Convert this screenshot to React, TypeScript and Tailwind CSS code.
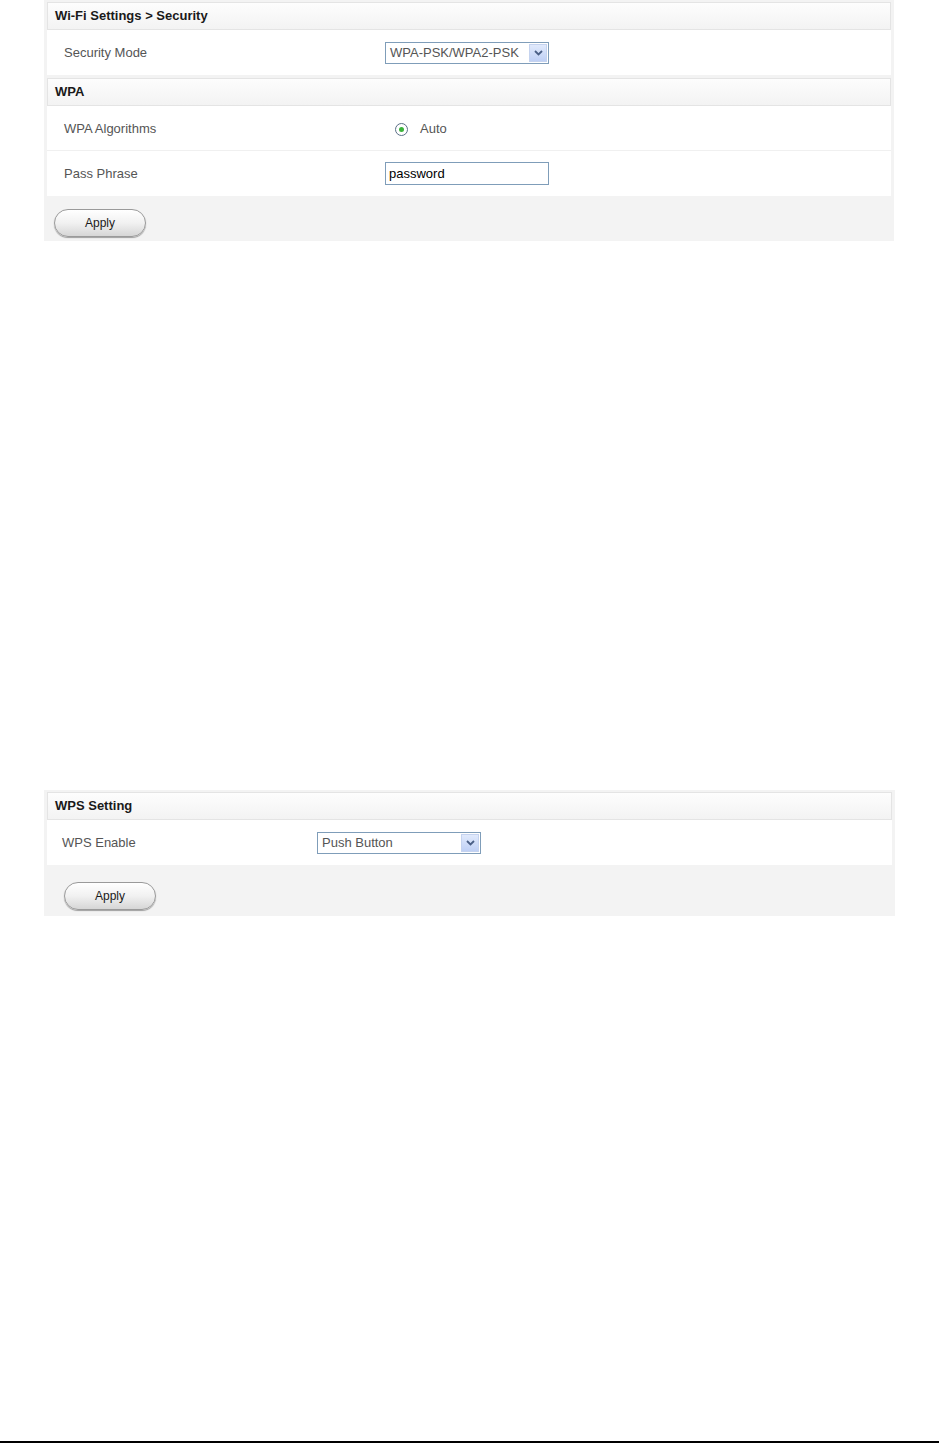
import React from "react";

const font = { fontFamily: '"Liberation Sans", Arial, sans-serif' };

const SectionHeader = ({ title }: { title: string }) => (
  <div className="mx-[3px] h-[28px] border border-[#e4e4e4] bg-gradient-to-b from-[#fdfdfd] to-[#f3f3f3] px-[7px] flex items-center text-[13px] font-bold text-[#1a1a1a]">
    {title}
  </div>
);

const Row = ({
  label,
  labelPad,
  valueLeft,
  children,
  divider,
}: {
  label: string;
  labelPad: string;
  valueLeft: string;
  children: React.ReactNode;
  divider?: boolean;
}) => (
  <div
    className={`mx-[3px] h-[45px] bg-white flex items-center ${divider ? "border-b border-[#f0f0f0] pt-[2px]" : ""}`}
  >
    <div className={`${labelPad} ${valueLeft} text-[13px] text-[#555]`}>{label}</div>
    <div className="flex items-center">{children}</div>
  </div>
);

const Arrow = () => (
  <div className="w-[18px] h-[18px] mr-[1px] bg-gradient-to-b from-[#e1eafc] to-[#bfd0f5] border border-[#c5d3ef] flex items-center justify-center">
    <svg width="9" height="6" viewBox="0 0 9 6">
      <path d="M1 1 L4.5 4.5 L8 1" fill="none" stroke="#4a5f86" strokeWidth="1.8" />
    </svg>
  </div>
);

const Select = ({ value }: { value: string }) => (
  <div className="w-[164px] h-[22px] border border-[#7f9db9] bg-white flex items-center justify-between">
    <span className="pl-[4px] text-[13px] text-[#555]">{value}</span>
    <Arrow />
  </div>
);

const ApplyButton = () => (
  <button
    type="button"
    className="w-[92px] h-[28px] rounded-full border border-[#9a9a9a] bg-gradient-to-b from-[#ffffff] via-[#f1f1f1] to-[#d6d6d6] shadow-[0_1px_1px_rgba(0,0,0,0.35)] text-[12px] text-[#1a1a1a]"
  >
    Apply
  </button>
);

export default function App() {
  return (
    <div className="w-[939px] h-[1443px] bg-white flex flex-col" style={font}>
      <div className="ml-[44px] w-[850px] bg-[#f3f3f3] pt-[2px]">
        <SectionHeader title="Wi-Fi Settings > Security" />
        <Row label="Security Mode" labelPad="pl-[17px]" valueLeft="w-[338px]">
          <Select value="WPA-PSK/WPA2-PSK" />
        </Row>
        <div className="h-[3px]" />
        <SectionHeader title="WPA" />
        <Row label="WPA Algorithms" labelPad="pl-[17px]" valueLeft="w-[348px]" divider>
          <span className="w-[13px] h-[13px] rounded-full border border-[#5a6f86] bg-white flex items-center justify-center">
            <span className="w-[5px] h-[5px] rounded-full bg-[#3bb33b]" />
          </span>
          <span className="ml-[12px] text-[13px] text-[#555]">Auto</span>
        </Row>
        <Row label="Pass Phrase" labelPad="pl-[17px]" valueLeft="w-[338px]">
          <div className="w-[164px] h-[23px] border border-[#7f9db9] bg-white flex items-center pl-[3px] text-[13px] text-black">
            password
          </div>
        </Row>
        <div className="h-[45px] pt-[13px] pl-[10px]">
          <ApplyButton />
        </div>
      </div>

      <div className="mt-[549px] ml-[44px] w-[851px] bg-[#f3f3f3] pt-[2px]">
        <SectionHeader title="WPS Setting" />
        <Row label="WPS Enable" labelPad="pl-[15px]" valueLeft="w-[270px]">
          <Select value="Push Button" />
        </Row>
        <div className="h-[51px] pt-[17px] pl-[20px]">
          <ApplyButton />
        </div>
      </div>

      <div className="mt-auto h-[2px] bg-black" />
    </div>
  );
}
